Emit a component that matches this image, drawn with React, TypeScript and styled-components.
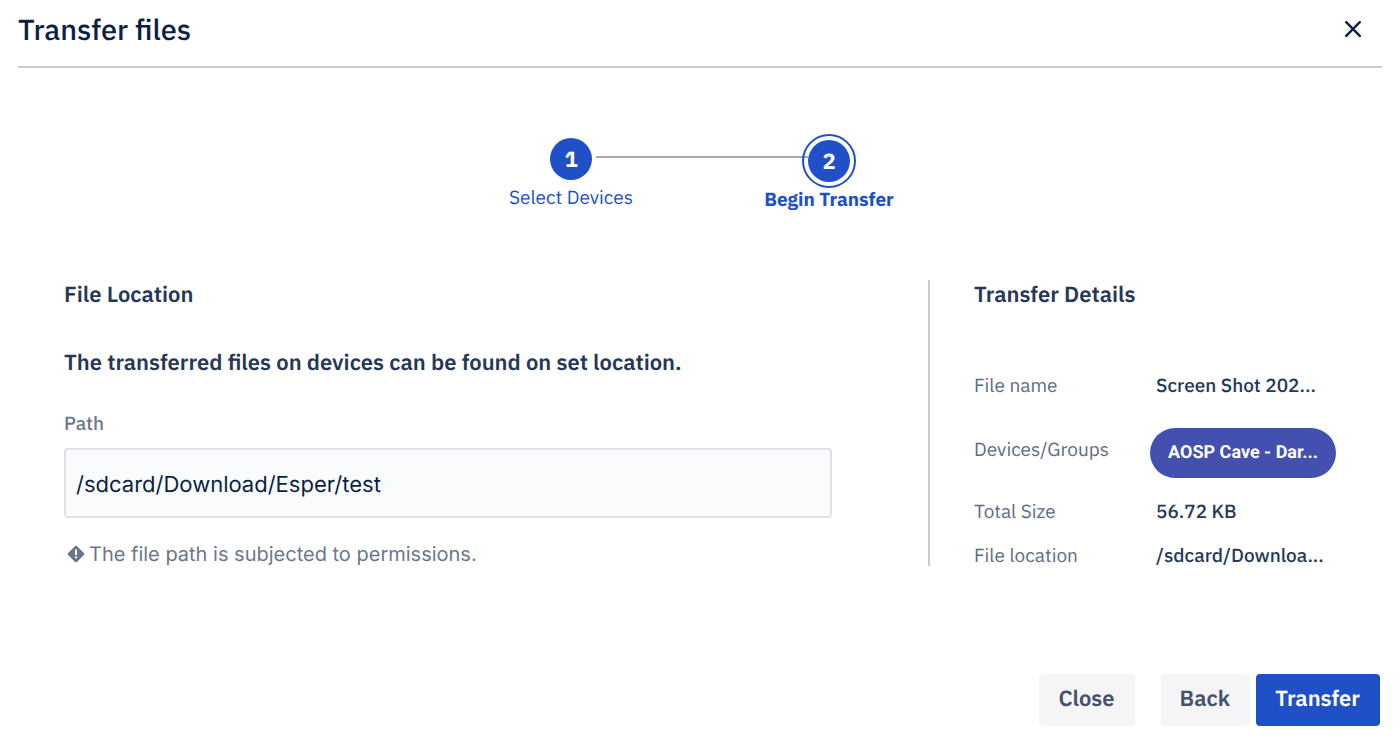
import React from "react";
import styled, { createGlobalStyle } from "styled-components";

const ui = `"IBM Plex Sans", Roboto, sans-serif`;
const input = `Inter, sans-serif`;
const blue = "#2050c8";

const GlobalStyle = createGlobalStyle`
  *, *::before, *::after { box-sizing: border-box; }
  body { margin: 0; background: #fff; font-family: ${ui}; color: #253858; text-rendering: geometricPrecision; }
  h1, h2, p, ol, dl, dd { margin: 0; padding: 0; }
  button, input { font: inherit; text-rendering: inherit; }
`;

const Dialog = styled.main`
  padding: 0 18px 12px;
`;

const Header = styled.header`
  display: flex;
  align-items: center;
  justify-content: space-between;
  height: 68px;
  padding: 0 17px 8px 0;
  border-bottom: 2px solid #cbcbcb;
`;

const Title = styled.h1`
  font-size: 29px;
  font-weight: 500;
  line-height: 36px;
  color: #0c1f44;
`;

const IconButton = styled.button`
  display: flex;
  padding: 4px;
  border: 0;
  background: none;
  color: #0c1f44;
  cursor: pointer;
`;

const Steps = styled.ol`
  display: flex;
  justify-content: center;
  margin-top: 70px;
  list-style: none;
  color: ${blue};
`;

const Step = styled.li<{ $current?: boolean }>`
  width: 258px;
  padding-top: ${(p) => (p.$current ? 2 : 0)}px;
  text-align: center;
  font-size: 19px;
  line-height: 24px;
  font-weight: ${(p) => (p.$current ? 700 : 400)};
`;

const MarkerRow = styled.div<{ $current?: boolean }>`
  display: flex;
  align-items: center;
  gap: ${(p) => (p.$current ? 0 : 4)}px;
  margin-bottom: 6px;
`;

const Marker = styled.span<{ $current?: boolean }>`
  flex: none;
  width: 42px;
  height: 42px;
  border-radius: 50%;
  background: ${blue};
  color: #fff;
  font-size: 22px;
  font-weight: 700;
  line-height: 44px;
  outline: ${(p) => (p.$current ? `2px solid ${blue}` : "none")};
  outline-offset: 4px;
`;

const Spacer = styled.span`
  flex: 1;
`;

const Track = styled.span<{ $end?: boolean }>`
  flex: 1;
  height: 2px;
  margin-bottom: ${(p) => (p.$end ? 8 : 4)}px;
  background: #a1a9b6;
`;

const Body = styled.div`
  display: grid;
  grid-template-columns: minmax(0, 1fr) 408px;
  margin: 68px 46px 0;
`;

const Location = styled.section`
  padding-right: 96px;
`;

const Heading = styled.h2`
  font-size: 22px;
  font-weight: 600;
  line-height: 30px;
`;

const Lead = styled.p`
  margin-top: 38px;
  font-size: 22px;
  font-weight: 600;
  line-height: 30px;
`;

const Label = styled.label`
  display: block;
  margin-top: 34px;
  font-size: 19px;
  font-weight: 500;
  line-height: 24px;
  color: #6b778c;
`;

const PathInput = styled.input`
  display: block;
  width: 100%;
  height: 70px;
  margin-top: 12px;
  padding: 4px 10px 0;
  border: 2px solid #dfe1e6;
  border-radius: 4px;
  background: #fafbfc;
  color: #0c1f44;
  font-family: ${input};
  font-size: 22px;
`;

const Hint = styled.p`
  display: flex;
  align-items: center;
  gap: 4px;
  margin-top: 24px;
  padding-left: 3px;
  font-family: ${input};
  font-size: 20px;
  line-height: 24px;
  color: #6b778c;
`;

const Details = styled.section`
  padding-left: 44px;
  border-left: 2px solid #cbcbcb;
`;

const DetailList = styled.dl`
  display: flex;
  flex-direction: column;
  gap: 24px;
  margin: 66px 0 0;
`;

const Detail = styled.div<{ $spaced?: boolean }>`
  display: grid;
  grid-template-columns: 176px minmax(0, 1fr);
  align-items: center;
  margin-bottom: ${(p) => (p.$spaced ? 8 : 0)}px;
  font-size: 19px;
  line-height: 20px;
`;

const Term = styled.dt<{ $raised?: boolean }>`
  padding-bottom: ${(p) => (p.$raised ? 6 : 0)}px;
  color: #5e6c84;
`;

const Value = styled.dd`
  && { padding-left: 6px; }
  font-weight: 500;
  white-space: nowrap;
`;

const Pill = styled.dd`
  height: 50px;
  border-radius: 25px;
  background: #4450af;
  color: #fff;
  font-family: Roboto, sans-serif;
  font-size: 18px;
  font-weight: 700;
  line-height: 49px;
  text-align: center;
  white-space: nowrap;
`;

const Footer = styled.footer`
  display: flex;
  justify-content: flex-end;
  gap: 6px;
  margin-top: 108px;
  padding-right: 2px;
`;

const Button = styled.button<{ $primary?: boolean; $apart?: boolean }>`
  height: 52px;
  margin-right: ${(p) => (p.$apart ? 20 : 0)}px;
  padding: 0 20px 4px 19px;
  border: 0;
  border-radius: 4px;
  background: ${(p) => (p.$primary ? blue : "#f5f5f7")};
  color: ${(p) => (p.$primary ? "#fff" : "#42526e")};
  font-size: 22px;
  font-weight: 600;
  cursor: pointer;
`;

export default function App() {
  return (
    <Dialog>
      <GlobalStyle />
      <Header>
        <Title>Transfer files</Title>
        <IconButton type="button" aria-label="Dismiss">
          <svg width="16" height="16" viewBox="0 0 16 16" fill="none" stroke="currentColor" strokeWidth="2.4" strokeLinecap="round">
            <path d="M1.2 1.2 14.8 14.8M14.8 1.2 1.2 14.8" />
          </svg>
        </IconButton>
      </Header>

      <Steps>
        <Step>
          <MarkerRow>
            <Spacer />
            <Marker>1</Marker>
            <Track />
          </MarkerRow>
          Select Devices
        </Step>
        <Step $current aria-current="step">
          <MarkerRow $current>
            <Track $end />
            <Marker $current>2</Marker>
            <Spacer />
          </MarkerRow>
          Begin Transfer
        </Step>
      </Steps>

      <Body>
        <Location>
          <Heading>File Location</Heading>
          <Lead>The transferred files on devices can be found on set location.</Lead>
          <Label htmlFor="path">Path</Label>
          <PathInput id="path" type="text" defaultValue="/sdcard/Download/Esper/test" />
          <Hint>
            <svg width="18" height="18" viewBox="0 0 18 18" aria-hidden="true">
              <path d="M9 2 16 9 9 16 2 9Z" fill="#6b778c" stroke="#6b778c" strokeWidth="2.6" strokeLinejoin="round" />
              <path d="M9 5.2V9.2" stroke="#fff" strokeWidth="2" strokeLinecap="round" />
              <circle cx="9" cy="12.4" r="1.1" fill="#fff" />
            </svg>
            The file path is subjected to permissions.
          </Hint>
        </Location>

        <Details>
          <Heading>Transfer Details</Heading>
          <DetailList>
            <Detail $spaced>
              <Term>File name</Term>
              <Value>Screen Shot 202...</Value>
            </Detail>
            <Detail>
              <Term $raised>Devices/Groups</Term>
              <Pill>AOSP Cave - Dar...</Pill>
            </Detail>
            <Detail>
              <Term>Total Size</Term>
              <Value>56.72 KB</Value>
            </Detail>
            <Detail>
              <Term>File location</Term>
              <Value>/sdcard/Downloa...</Value>
            </Detail>
          </DetailList>
        </Details>
      </Body>

      <Footer>
        <Button type="button" $apart>Close</Button>
        <Button type="button">Back</Button>
        <Button type="button" $primary>Transfer</Button>
      </Footer>
    </Dialog>
  );
}
